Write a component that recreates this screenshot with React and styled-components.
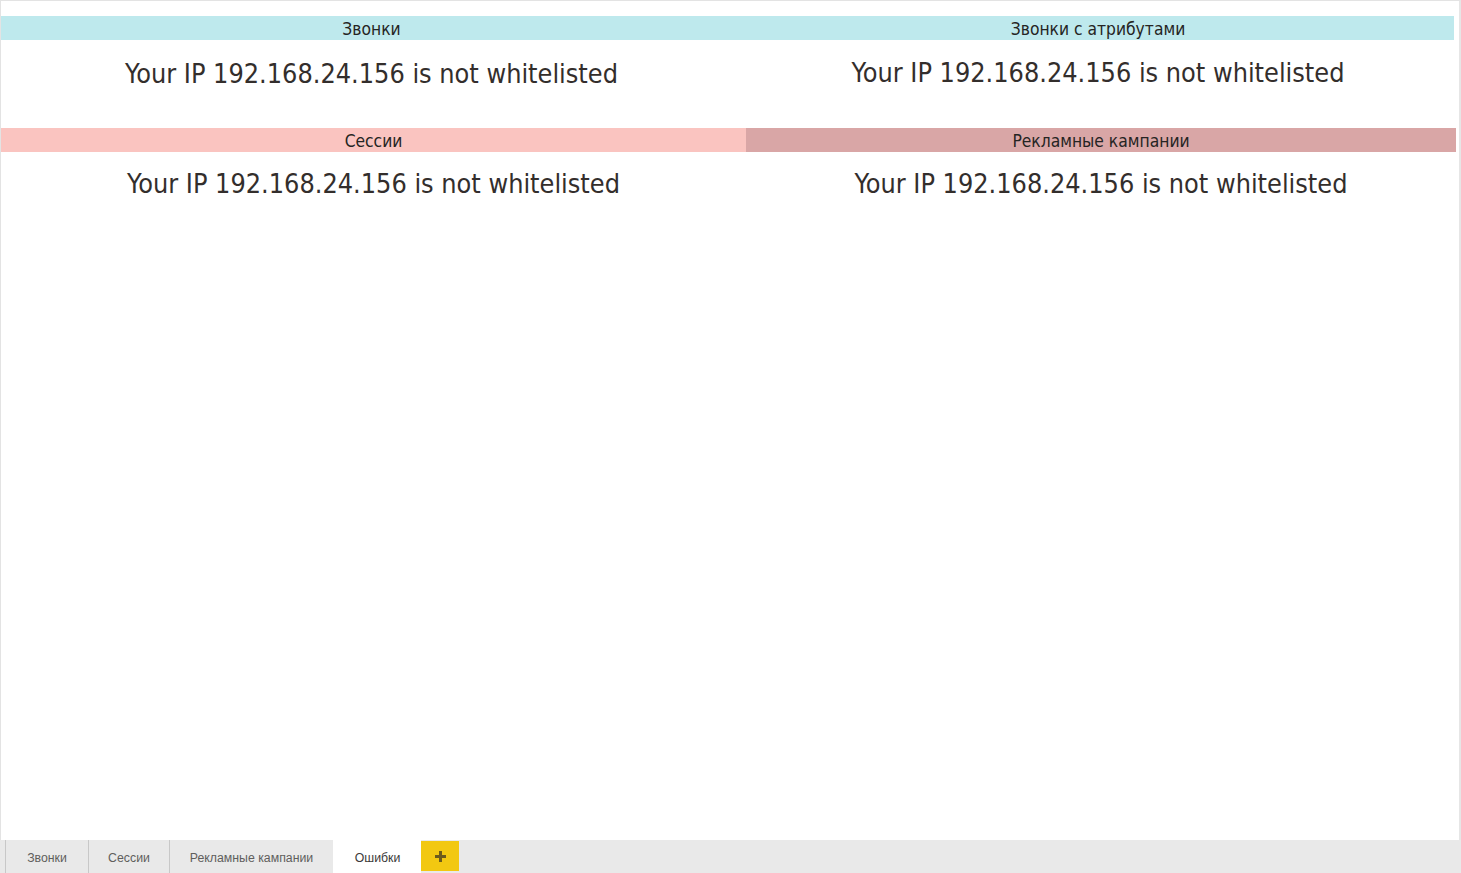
import styled, { createGlobalStyle } from 'styled-components';

const GlobalStyle = createGlobalStyle`
  html, body {
    margin: 0;
    padding: 0;
    background: #ffffff;
  }
  #root {
    height: 873px;
  }
`;

const Frame = styled.div`
  width: 1461px;
  height: 873px;
  box-sizing: border-box;
  display: flex;
  flex-direction: column;
  overflow: hidden;
`;

const Canvas = styled.div`
  flex: 1;
  box-sizing: border-box;
  border-top: 1px solid #e3e3e3;
  border-left: 1px solid #e3e3e3;
  border-right: 2px solid #e6e6e6;
  padding-top: 15px;
  display: flex;
  flex-direction: column;
`;

const Row = styled.div`
  display: grid;
  grid-template-columns: ${(p) => p.$cols};
  height: 112px;
`;

const Visual = styled.div`
  display: flex;
  flex-direction: column;
`;

const Header = styled.div`
  height: 24px;
  background: ${(p) => p.$bg};
  display: flex;
  align-items: center;
  justify-content: center;
  font-family: 'DejaVu Sans Condensed', 'DejaVu Sans', sans-serif;
  font-size: 17.3px;
  color: #252423;
  padding-top: 1px;
  box-sizing: border-box;
`;

const Message = styled.div`
  text-align: center;
  font-family: 'DejaVu Sans Condensed', 'DejaVu Sans', sans-serif;
  font-size: 26.8px;
  color: #332e2c;
  padding-top: ${(p) => p.$top}px;
  line-height: 32px;
`;

const TabBar = styled.div`
  height: 33px;
  background: #e9e9e9;
  display: flex;
  align-items: stretch;
  padding-left: 5px;
`;

const Tab = styled.div`
  display: flex;
  align-items: center;
  justify-content: center;
  box-sizing: border-box;
  width: ${(p) => p.$w}px;
  padding-top: 2px;
  font-family: 'Liberation Sans', Arial, sans-serif;
  font-size: 12.3px;
  color: ${(p) => (p.$active ? '#3b3a39' : '#605e5c')};
  background: ${(p) => (p.$active ? '#ffffff' : 'transparent')};
  border-left: 1px solid ${(p) => (p.$active ? '#ffffff' : '#c8c8c8')};
`;

const AddButton = styled.div`
  width: 38px;
  margin: 1px 0 2px;
  background: #f2c811;
  display: flex;
  align-items: center;
  justify-content: center;
`;

const messageText = 'Your IP 192.168.24.156 is not whitelisted';

const tabs = [
  { label: 'Звонки', w: 83 },
  { label: 'Сессии', w: 81 },
  { label: 'Рекламные кампании', w: 164 },
  { label: 'Ошибки', w: 88, active: true },
];

export default function App() {
  return (
    <>
      <GlobalStyle />
      <Frame>
        <Canvas>
          <Row $cols="741px 712px">
            <Visual>
              <Header $bg="#bee9ed">Звонки</Header>
              <Message $top={18}>{messageText}</Message>
            </Visual>
            <Visual>
              <Header $bg="#bee9ed">Звонки с атрибутами</Header>
              <Message $top={17}>{messageText}</Message>
            </Visual>
          </Row>
          <Row $cols="745px 710px">
            <Visual>
              <Header $bg="#fac4c0">Сессии</Header>
              <Message $top={16}>{messageText}</Message>
            </Visual>
            <Visual>
              <Header $bg="#d9a6a6">Рекламные кампании</Header>
              <Message $top={16}>{messageText}</Message>
            </Visual>
          </Row>
        </Canvas>
        <TabBar>
          {tabs.map((t) => (
            <Tab key={t.label} $w={t.w} $active={t.active}>
              {t.label}
            </Tab>
          ))}
          <AddButton>
            <svg width="11" height="11" viewBox="0 0 11 11">
              <path d="M4 0h3v4h4v3H7v4H4V7H0V4h4z" fill="#6b5a1c" />
            </svg>
          </AddButton>
        </TabBar>
      </Frame>
    </>
  );
}
